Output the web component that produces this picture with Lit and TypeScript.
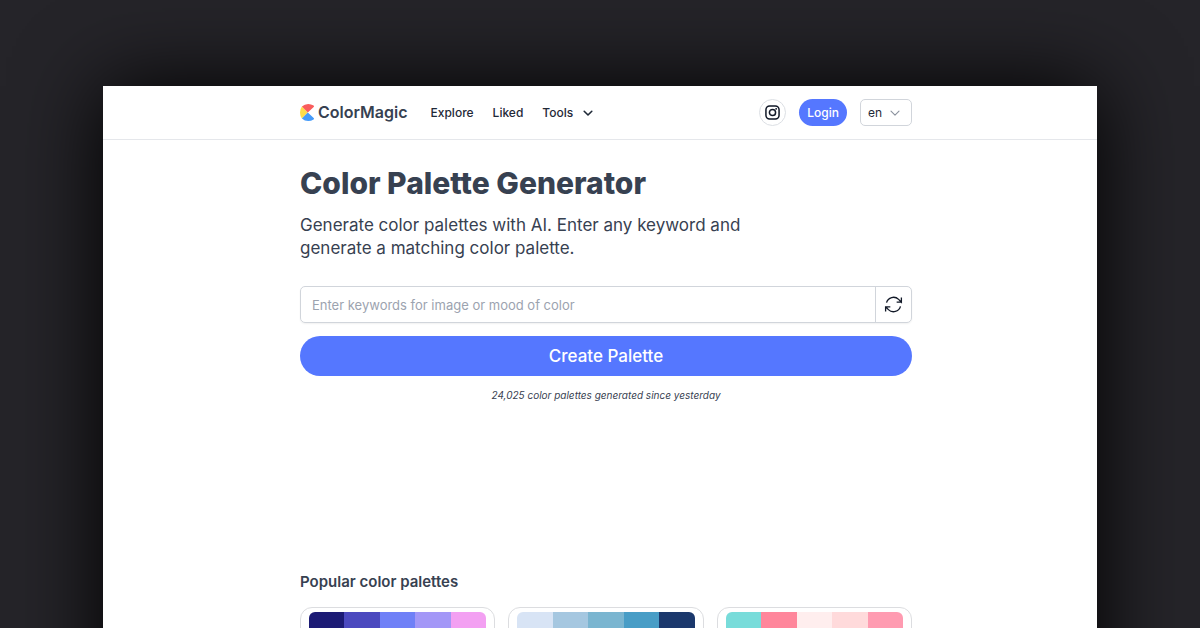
import { LitElement, html, css } from "lit";
import { customElement, property } from "lit/decorators.js";
import { styleMap } from "lit/directives/style-map.js";

const PALETTES: string[][] = [
  ["#1c1b75", "#4b49bf", "#6f80f7", "#a397f7", "#f3a0f2"],
  ["#d8e4f5", "#a5c7e0", "#7ab5d0", "#489dc6", "#1b386c"],
  ["#78dcda", "#ff869b", "#ffeeee", "#ffdadb", "#ff9bb1"],
];

@customElement("palette-card")
export class PaletteCard extends LitElement {
  @property({ type: Array }) colors: string[] = [];

  static styles = css`
    :host {
      display: block;
      padding: 4px 8px 8px;
      border: 1px solid #dcdde0;
      border-radius: 12px;
      background: #fff;
    }
    .swatches {
      display: flex;
      height: 120px;
      overflow: hidden;
      border-radius: 6px;
    }
    .swatch {
      flex: 1;
    }
  `;

  render() {
    return html`<div class="swatches">
      ${this.colors.map(
        (c) => html`<div class="swatch" style=${styleMap({ background: c })}></div>`
      )}
    </div>`;
  }
}

@customElement("app-root")
export class AppRoot extends LitElement {
  static styles = css`
    :host {
      display: block;
      box-sizing: border-box;
      height: 100vh;
      overflow: hidden;
      padding: 86px 103px 0;
      background: #252429;
      font-family: Inter, "Liberation Sans", sans-serif;
      color: #374151;
    }
    * {
      box-sizing: border-box;
    }
    button,
    input,
    select {
      margin: 0;
      font: inherit;
      color: inherit;
    }
    button {
      padding: 0;
      border: 0;
      background: none;
      cursor: pointer;
    }
    svg {
      display: block;
      flex: none;
    }
    .page {
      min-height: 100vh;
      background: #fff;
      box-shadow: 0 0 80px #000;
    }
    .wrap {
      max-width: 624px;
      margin: 0 auto;
      padding-left: 12px;
    }
    .header {
      border-bottom: 1px solid #e5e7eb;
    }
    .bar {
      display: flex;
      align-items: center;
      height: 53px;
      font-size: 12px;
      font-weight: 500;
      color: #1f2937;
    }
    .logo {
      display: flex;
      align-items: center;
      gap: 3px;
      margin-right: 23px;
      font-size: 16px;
      line-height: 17px;
      font-weight: 600;
      color: #374151;
      text-decoration: none;
    }
    .nav {
      display: flex;
      align-items: center;
      gap: 19px;
    }
    .nav a {
      color: inherit;
      text-decoration: none;
    }
    .tools {
      display: flex;
      align-items: center;
      gap: 10px;
    }
    .actions {
      display: flex;
      align-items: center;
      gap: 13px;
      margin-left: auto;
    }
    .round {
      display: grid;
      place-items: center;
      width: 27px;
      height: 27px;
      border: 1px solid #dcdfe4;
      border-radius: 50%;
      color: #111827;
    }
    .login {
      height: 27px;
      padding: 0 8px;
      border-radius: 14px;
      background: #5577ff;
      color: #fff;
    }
    .lang {
      display: grid;
      align-items: center;
      width: 52px;
    }
    .lang select,
    .lang svg {
      grid-area: 1 / 1;
    }
    .lang select {
      width: 100%;
      height: 27px;
      padding: 0 7px;
      border: 1px solid #d1d5db;
      border-radius: 5px;
      background: #fff;
      font-weight: 400;
      appearance: none;
    }
    .lang svg {
      justify-self: end;
      margin-right: 12px;
      pointer-events: none;
    }
    h1 {
      margin: 0;
      padding-top: 25px;
      font-size: 30px;
      line-height: 36px;
      font-weight: 800;
    }
    .lead {
      max-width: 480px;
      margin: 13px 0 0;
      font-size: 17px;
      line-height: 23px;
      font-weight: 400;
    }
    .search {
      display: flex;
      height: 37px;
      margin-top: 26px;
      border: 1px solid #d1d5db;
      border-radius: 5px;
      box-shadow: 0 1px 2px rgba(0, 0, 0, 0.06);
    }
    .search input {
      flex: 1;
      min-width: 0;
      padding: 0 11px;
      border: 0;
      outline: 0;
      background: none;
      font-size: 13px;
    }
    .search input::placeholder {
      color: #9ca3af;
      opacity: 1;
    }
    .search button {
      display: grid;
      place-items: center;
      width: 36px;
      border-left: 1px solid #d1d5db;
      color: #111827;
    }
    .create {
      display: block;
      width: 100%;
      height: 40px;
      margin-top: 13px;
      border-radius: 20px;
      background: #5577ff;
      color: #fff;
      font-size: 17px;
      font-weight: 500;
    }
    .note {
      margin: 11px 0 0;
      font-size: 10px;
      line-height: 16px;
      font-style: italic;
      text-align: center;
    }
    h2 {
      margin: 169px 0 0;
      font-size: 15px;
      line-height: 20px;
      font-weight: 600;
    }
    .cards {
      display: grid;
      grid-template-columns: repeat(3, 1fr);
      gap: 13px;
      margin-top: 15px;
    }
  `;

  render() {
    return html`
      <div class="page">
        <header class="header">
          <div class="wrap bar">
            <a class="logo" href="#">
              <svg width="15" height="17" viewBox="0 0 15 17" aria-hidden="true">
                <path d="M7.8 8.5 1.9 2.4Q0 5 0 8.5t1.9 6.1Z" fill="#ffdc4a" />
                <path d="M7.8 8.5 1.9 2.6Q4.6 0 8.2 0q2.9 0 5.4 1.5.9.7.1 1.4Z" fill="#f95c5c" />
                <path d="M7.8 8.5 1.9 14.4Q4.6 17 8.2 17q2.9 0 5.4-1.5.9-.7.1-1.4Z" fill="#459bfa" />
              </svg>
              <span>ColorMagic</span>
            </a>
            <nav class="nav">
              <a href="#">Explore</a>
              <a href="#">Liked</a>
              <button class="tools">
                Tools
                <svg width="10" height="10" viewBox="0 0 10 10" fill="none" stroke="currentColor" stroke-width="1.6" stroke-linecap="round" stroke-linejoin="round" aria-hidden="true">
                  <path d="m1.2 3.3 3.8 3.7 3.8-3.7" />
                </svg>
              </button>
            </nav>
            <div class="actions">
              <a class="round" href="#" aria-label="Instagram">
                <svg width="15" height="15" viewBox="0 0 16 16" fill="none" stroke="currentColor" stroke-width="1.6" aria-hidden="true">
                  <rect x="1" y="1" width="14" height="14" rx="4" />
                  <circle cx="8" cy="8" r="3.3" />
                  <circle cx="11.9" cy="4.1" r="1" fill="currentColor" stroke="none" />
                </svg>
              </a>
              <button class="login">Login</button>
              <div class="lang">
                <select aria-label="Language">
                  <option>en</option>
                </select>
                <svg width="10" height="10" viewBox="0 0 10 10" fill="none" stroke="#8b929e" stroke-width="1.1" stroke-linecap="round" stroke-linejoin="round" aria-hidden="true">
                  <path d="m1 3.2 4 4 4-4" />
                </svg>
              </div>
            </div>
          </div>
        </header>
        <main class="wrap">
          <h1>Color Palette Generator</h1>
          <p class="lead">
            Generate color palettes with AI. Enter any keyword and generate a matching color palette.
          </p>
          <div class="search">
            <input type="text" aria-label="Keywords" placeholder="Enter keywords for image or mood of color" />
            <button aria-label="Random keyword">
              <svg width="21" height="21" viewBox="0 0 24 24" fill="none" stroke="currentColor" stroke-width="1.5" stroke-linejoin="miter" aria-hidden="true">
                <path d="M15.6 9.348h5.415M2.985 20.1v-5.448h5.4m-5.4 0 3.181 3.183a8.25 8.25 0 0 0 13.803-3.7M4.031 9.865a8.25 8.25 0 0 1 13.803-3.7l3.181 3.182V3.9" />
              </svg>
            </button>
          </div>
          <button class="create">Create Palette</button>
          <p class="note">24,025 color palettes generated since yesterday</p>
          <h2>Popular color palettes</h2>
          <div class="cards">
            ${PALETTES.map((p) => html`<palette-card .colors=${p}></palette-card>`)}
          </div>
        </main>
      </div>
    `;
  }
}
